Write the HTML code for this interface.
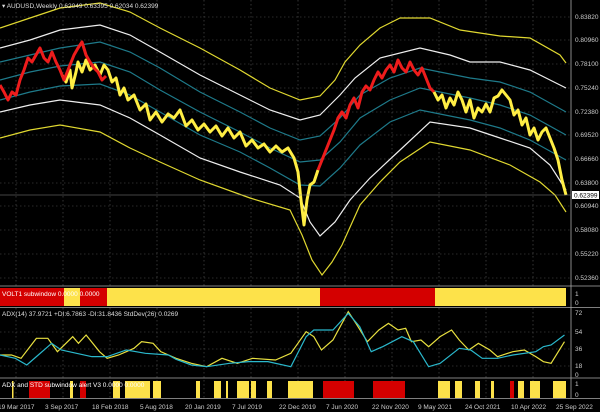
<!DOCTYPE html>
<html><head><style>
body{margin:0;background:#000;width:600px;height:412px;overflow:hidden;font-family:"Liberation Sans",sans-serif}
svg{display:block}
text{font-family:"Liberation Sans",sans-serif}
</style></head><body>
<svg width="600" height="412" viewBox="0 0 600 412" xmlns="http://www.w3.org/2000/svg">
<rect width="600" height="412" fill="#000"/>
<!-- grid -->
<g stroke="#555" stroke-width="0.6" stroke-dasharray="1.5,2.5">
<line x1="16" y1="0" x2="16" y2="398"/><line x1="63" y1="0" x2="63" y2="398"/><line x1="110" y1="0" x2="110" y2="398"/><line x1="157" y1="0" x2="157" y2="398"/><line x1="204" y1="0" x2="204" y2="398"/><line x1="251" y1="0" x2="251" y2="398"/><line x1="298" y1="0" x2="298" y2="398"/><line x1="345" y1="0" x2="345" y2="398"/><line x1="392" y1="0" x2="392" y2="398"/><line x1="439" y1="0" x2="439" y2="398"/><line x1="486" y1="0" x2="486" y2="398"/><line x1="533" y1="0" x2="533" y2="398"/>
<line x1="0" y1="17" x2="570" y2="17"/><line x1="0" y1="40" x2="570" y2="40"/><line x1="0" y1="64" x2="570" y2="64"/><line x1="0" y1="88" x2="570" y2="88"/><line x1="0" y1="112" x2="570" y2="112"/><line x1="0" y1="135" x2="570" y2="135"/><line x1="0" y1="159" x2="570" y2="159"/><line x1="0" y1="183" x2="570" y2="183"/><line x1="0" y1="206" x2="570" y2="206"/><line x1="0" y1="230" x2="570" y2="230"/><line x1="0" y1="254" x2="570" y2="254"/><line x1="0" y1="278" x2="570" y2="278"/>
<line x1="0" y1="332" x2="570" y2="332"/><line x1="0" y1="349" x2="570" y2="349"/><line x1="0" y1="366" x2="570" y2="366"/>
</g>
<!-- bands -->
<g fill="none" stroke-width="1.2">
<polyline stroke="#e0d830" points="0,28 30,18 60,8 100,3 130,12 160,28 200,48 240,70 270,88 300,100 320,96 335,80 345,62 360,45 380,28 400,18 430,18 460,30 500,36 530,38 560,55 566,63"/>
<polyline stroke="#eee" points="0,48 30,40 60,30 100,25 130,35 160,52 200,75 240,95 270,110 300,120 320,115 340,95 355,78 380,58 420,48 450,55 470,62 500,62 530,70 550,80 566,88"/>
<polyline stroke="#1e7a8a" points="0,62 30,55 60,48 100,42 130,52 160,68 200,92 240,112 270,128 300,140 320,136 340,118 360,95 390,78 420,68 470,78 500,82 530,92 566,112"/>
<polyline stroke="#1e7a8a" points="0,80 30,72 60,66 100,62 130,72 160,90 200,112 240,132 270,148 300,162 320,160 340,142 360,118 390,100 420,88 470,98 500,105 530,115 566,135"/>
<polyline stroke="#1e7a8a" points="0,100 30,92 60,86 100,84 130,95 160,112 200,135 240,152 270,168 300,185 320,186 340,168 360,145 390,122 420,110 470,120 500,128 530,140 566,160"/>
<polyline stroke="#eee" points="0,112 30,105 60,100 100,105 130,118 160,135 200,158 240,172 280,185 300,198 310,222 320,236 335,222 350,200 370,178 400,150 430,122 470,128 500,138 530,148 550,165 566,190"/>
<polyline stroke="#e0d830" points="0,138 30,130 60,125 100,132 130,148 160,162 200,180 250,198 290,210 302,235 312,260 322,275 332,262 342,245 360,205 380,182 400,162 430,142 470,150 510,165 540,182 555,195 566,212"/>
</g>
<!-- price candles -->
<g fill="none" stroke-linejoin="round">
<polyline stroke="#ffee44" stroke-width="3" points="62,75 66,82 70,70 72,88 76,72 78,62 82,72 86,60 90,70 95,65 100,75 104,65 108,70 112,82 116,78 120,95 124,88 128,100 134,95 140,110 146,104 150,120 156,112 162,122 168,114 174,118 180,110 186,126 192,120 198,130 204,124 210,132 216,126 222,136 228,128 234,138 240,132 246,146 252,140 258,148 264,144 270,152 276,146 282,152 288,148 294,158 298,172 301,200 304,225 307,200 310,185 314,182 318,170"/>
<polyline stroke="#ee1c1c" stroke-width="3" points="0,85 4,92 8,100 12,92 16,95 20,80 24,70 28,58 32,62 36,55 40,48 44,58 48,62 52,52 56,62 60,70 64,80 70,65 74,55 78,48 82,42 86,55 90,62 94,68 98,72 102,80 106,76"/>
<polyline stroke="#ee1c1c" stroke-width="3" points="318,170 322,160 326,150 330,140 334,130 338,118 342,112 346,118 350,105 354,98 358,108 362,92 366,86 370,90 374,80 378,72 382,78 386,70 390,65 394,72 398,60 402,68 406,72 410,62 414,70 418,75 422,68 426,78 430,88 434,92"/>
<polyline stroke="#ffee44" stroke-width="3" points="434,92 438,100 442,95 446,108 450,98 454,105 458,92 462,100 466,112 470,100 474,118 478,108 482,112 486,104 490,112 494,98 498,96 502,90 506,95 510,100 514,115 518,110 522,125 526,118 530,135 534,128 538,140 542,132 546,128 550,138 554,148 558,160 562,180 566,195"/>
</g>
<!-- right axis -->
<line x1="571" y1="0" x2="571" y2="398" stroke="#aaa" stroke-width="0.8"/>
<line x1="0" y1="195" x2="571" y2="195" stroke="#888" stroke-width="0.6"/>
<g fill="#ccc" font-size="6.5">
<text x="575" y="19">0.83820</text><text x="575" y="42">0.80960</text><text x="575" y="66">0.78100</text><text x="575" y="90">0.75240</text><text x="575" y="114">0.72380</text><text x="575" y="137">0.69520</text><text x="575" y="161">0.66660</text><text x="575" y="185">0.63800</text><text x="575" y="208">0.60940</text><text x="575" y="232">0.58080</text><text x="575" y="256">0.55220</text><text x="575" y="280">0.52360</text>
</g>
<rect x="572" y="191" width="27" height="8" fill="#fff"/>
<text x="574" y="197.5" font-size="6.5" fill="#000">0.62399</text>
<text x="2" y="8" font-size="6.5" fill="#ddd">▾ AUDUSD,Weekly  0.62049 0.63395 0.62034 0.62399</text>
<!-- separators -->
<g stroke="#aaa" stroke-width="0.8">
<line x1="0" y1="286" x2="600" y2="286"/><line x1="0" y1="307.5" x2="600" y2="307.5"/><line x1="0" y1="378" x2="600" y2="378"/><line x1="0" y1="398.5" x2="600" y2="398.5"/>
</g>
<!-- sub1 -->
<rect x="0" y="288" width="64" height="18" fill="#d40000"/>
<rect x="64" y="288" width="16" height="18" fill="#fde24a"/>
<rect x="80" y="288" width="27" height="18" fill="#d40000"/>
<rect x="107" y="288" width="213" height="18" fill="#fde24a"/>
<rect x="320" y="288" width="115" height="18" fill="#d40000"/>
<rect x="435" y="288" width="131" height="18" fill="#fde24a"/>
<text x="2" y="296" font-size="6.5" fill="#fff">VOLT1 subwindow 0.0000 0.0000</text>
<g fill="#ccc" font-size="6.5"><text x="575" y="296">1</text><text x="575" y="305">0</text>
<text x="575" y="315">72</text><text x="575" y="334">54</text><text x="575" y="351">36</text><text x="575" y="368">18</text><text x="575" y="377">0</text>
<text x="575" y="386">1</text><text x="575" y="397">0</text></g>
<!-- ADX -->
<g transform="translate(0,270) scale(0.3827,0.3333)" fill="none">
<polyline vector-effect="non-scaling-stroke" stroke="#e8e040" stroke-width="1.2" points="0,255 30,255 55,265 95,205 125,205 150,245 190,200 205,220 225,195 260,245 280,265 310,255 350,235 370,215 400,220 420,245 460,265 500,280 540,290 580,265 620,280 660,265 720,270 760,250 800,185 820,200 840,240 870,210 910,125 930,160 960,215 990,180 1015,160 1040,180 1060,175 1075,215 1100,210 1120,230 1150,200 1180,180 1200,210 1225,240 1250,220 1280,240 1300,260 1340,245 1370,240 1400,260 1420,275 1440,280 1475,215"/>
<polyline vector-effect="non-scaling-stroke" stroke="#2ab8cc" stroke-width="1.2" points="0,255 40,265 70,285 100,255 135,220 160,240 200,250 240,260 280,260 330,240 380,250 440,255 460,268 500,285 540,290 600,280 650,275 700,275 760,290 800,200 820,180 870,180 910,130 940,170 970,245 1000,230 1050,200 1080,215 1120,290 1150,280 1200,235 1230,240 1260,265 1300,265 1340,255 1400,245 1420,230 1440,225 1475,195"/>
</g>
<text x="2" y="316" font-size="6.5" fill="#ddd">ADX(14) 37.9721 +DI:6.7863 -DI:31.8436  StdDev(26) 0.0269</text>
<!-- sub2 -->
<g>
<rect x="12" y="381" width="1.5" height="17" fill="#fde24a"/><rect x="29" y="381" width="21" height="17" fill="#d40000"/><rect x="70" y="381" width="3" height="17" fill="#fde24a"/><rect x="80" y="381" width="6" height="17" fill="#d40000"/><rect x="113" y="381" width="7" height="17" fill="#fde24a"/><rect x="125" y="381" width="25" height="17" fill="#fde24a"/><rect x="153" y="381" width="8" height="17" fill="#fde24a"/><rect x="196" y="381" width="4" height="17" fill="#fde24a"/><rect x="214" y="381" width="7" height="17" fill="#fde24a"/><rect x="226" y="381" width="2" height="17" fill="#fde24a"/><rect x="237" y="381" width="12" height="17" fill="#fde24a"/><rect x="251" y="381" width="5" height="17" fill="#fde24a"/><rect x="267" y="381" width="5" height="17" fill="#fde24a"/><rect x="288" y="381" width="25" height="17" fill="#fde24a"/><rect x="323" y="381" width="31" height="17" fill="#d40000"/><rect x="373" y="381" width="32" height="17" fill="#d40000"/><rect x="438" y="381" width="12" height="17" fill="#fde24a"/><rect x="455" y="381" width="7" height="17" fill="#fde24a"/><rect x="475" y="381" width="5" height="17" fill="#fde24a"/><rect x="491" y="381" width="3" height="17" fill="#fde24a"/><rect x="510" y="381" width="4" height="17" fill="#d40000"/><rect x="518" y="381" width="6" height="17" fill="#fde24a"/><rect x="530" y="381" width="10" height="17" fill="#fde24a"/><rect x="553" y="381" width="13" height="17" fill="#fde24a"/>
</g>
<text x="2" y="387" font-size="6.5" fill="#fff">ADX and STD subwindow alert V3 0.0000 0.0000</text>
<!-- dates -->
<g fill="#ccc" font-size="6.5">
<text x="-2" y="409">19 Mar 2017</text><text x="45" y="409">3 Sep 2017</text><text x="92" y="409">18 Feb 2018</text><text x="140" y="409">5 Aug 2018</text><text x="185" y="409">20 Jan 2019</text><text x="232" y="409">7 Jul 2019</text><text x="279" y="409">22 Dec 2019</text><text x="326" y="409">7 Jun 2020</text><text x="372" y="409">22 Nov 2020</text><text x="418" y="409">9 May 2021</text><text x="465" y="409">24 Oct 2021</text><text x="511" y="409">10 Apr 2022</text><text x="556" y="409">25 Sep 2022</text>
</g>
</svg>
</body></html>
